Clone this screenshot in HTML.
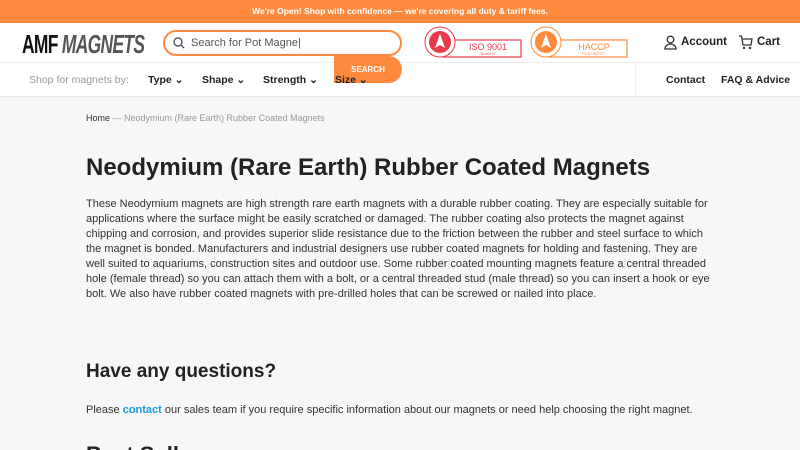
<!DOCTYPE html>
<html><head><meta charset="utf-8"><style>
*{margin:0;padding:0;box-sizing:border-box}
html,body{width:800px;height:450px;overflow:hidden}
body{background:#f7f7f7;font-family:"Liberation Sans",sans-serif;color:#222;position:relative}
.top{height:23px;background:#ff8a3d;color:#fff;font-size:8.5px;font-weight:bold;text-align:center;line-height:23px}
.hdr{position:absolute;top:23px;left:0;width:800px;height:40px;background:#fff;border-bottom:1px solid #eee}
.nav{position:absolute;top:63px;left:0;width:800px;height:34px;background:#fff;border-bottom:1px solid #e8e8e8}
.abs{position:absolute}
.logo{left:22px;top:6px;font-size:26px;font-weight:bold;letter-spacing:-1px;transform:scaleX(.67);transform-origin:left;white-space:nowrap;color:#111}
.logo i{color:#555}
.search{left:163px;top:7px;width:239px;height:26px;border:2px solid #ff8a3d;border-radius:13px;background:#fff;font-size:11px;color:#555;padding-left:26px;line-height:22px}
.btn{left:334px;top:56px;width:68px;height:27px;background:#ff8a3d;border-radius:0 14px 14px 0;color:#fff;font-size:8px;font-weight:bold;text-align:center;line-height:27px;z-index:3}
.n{font-size:10.5px;font-weight:bold;color:#222;top:11px;z-index:5}
.c{position:absolute;left:86px;width:630px}
</style></head><body>
<div class="top">We're Open! Shop with confidence — we're covering all duty &amp; tariff fees.</div>
<div class="hdr">
<div class="abs logo">AMF <i>MAGNETS</i></div>
<div class="abs search"><svg class="abs" style="left:8px;top:5px" width="12" height="12" viewBox="0 0 12 12"><circle cx="5" cy="5" r="4" fill="none" stroke="#556" stroke-width="1.4"/><path d="M8 8l3 3" stroke="#556" stroke-width="1.4"/></svg>Search for Pot Magne|</div>
<svg class="abs" style="left:423px;top:3px" width="100" height="34"><rect x="20" y="14" width="78" height="17" fill="#fff" stroke="#e8394a" stroke-width="1.2"/><circle cx="17" cy="16" r="15" fill="#fff" stroke="#e8394a"/><circle cx="17" cy="16" r="11" fill="#e8394a"/><path d="M17 8l5 14-5-3-5 3z" fill="#fff"/><text x="65" y="24" font-size="9" fill="#e8394a" text-anchor="middle" font-family="Liberation Sans">ISO 9001</text><text x="65" y="29" font-size="3.5" fill="#e8394a" text-anchor="middle">QUALITY</text></svg>
<svg class="abs" style="left:529px;top:3px" width="100" height="34"><rect x="20" y="14" width="78" height="17" fill="#fff" stroke="#ff8a3d" stroke-width="1.2"/><circle cx="17" cy="16" r="15" fill="#fff" stroke="#ff8a3d"/><circle cx="17" cy="16" r="11" fill="#ff8a3d"/><path d="M17 8l5 14-5-3-5 3z" fill="#fff"/><text x="65" y="24" font-size="9" fill="#ff8a3d" text-anchor="middle">HACCP</text><text x="65" y="29" font-size="3.5" fill="#ff8a3d" text-anchor="middle">FOOD SAFETY</text></svg>
<svg class="abs" style="left:664px;top:12px" width="13" height="15" viewBox="0 0 13 15"><circle cx="6.5" cy="4.5" r="3.3" fill="none" stroke="#333" stroke-width="1.3"/><path d="M1 14c0-3 2.5-5 5.5-5s5.5 2 5.5 5z" fill="none" stroke="#333" stroke-width="1.3"/></svg>
<div class="abs n" style="left:681px;top:13px;font-size:11.5px">Account</div>
<svg class="abs" style="left:738px;top:12px" width="15" height="15" viewBox="0 0 15 15"><path d="M1 1h2.5l1.5 9h8l1-6H4" fill="none" stroke="#333" stroke-width="1.3"/><circle cx="6" cy="13" r="1.2" fill="#333"/><circle cx="12" cy="13" r="1.2" fill="#333"/></svg>
<div class="abs n" style="left:757px;top:13px;font-size:11.5px">Cart</div>
</div>
<div class="nav">
<div class="abs" style="left:29px;top:11px;font-size:10.5px;color:#999">Shop for magnets by:</div>
<div class="abs n" style="left:148px">Type ⌄</div>
<div class="abs n" style="left:202px">Shape ⌄</div>
<div class="abs n" style="left:263px">Strength ⌄</div>
<div class="abs" style="left:635px;top:0;width:1px;height:34px;background:#eee"></div>
<div class="abs n" style="left:666px">Contact</div>
<div class="abs n" style="left:721px">FAQ &amp; Advice</div>
</div>
<div class="btn abs">SEARCH</div>
<div class="abs n" style="left:335px;top:74px">Size ⌄</div>
<div class="c" style="top:113px;font-size:9px;color:#999"><span style="color:#333">Home</span> — Neodymium (Rare Earth) Rubber Coated Magnets</div>
<div class="c" style="top:154px;font-size:24px;font-weight:bold;color:#222;white-space:nowrap">Neodymium (Rare Earth) Rubber Coated Magnets</div>
<div class="c" style="top:197px;font-size:11px;line-height:15px;color:#333">These Neodymium magnets are high strength rare earth magnets with a durable rubber coating. They are especially suitable for applications where the surface might be easily scratched or damaged. The rubber coating also protects the magnet against chipping and corrosion, and provides superior slide resistance due to the friction between the rubber and steel surface to which the magnet is bonded. Manufacturers and industrial designers use rubber coated magnets for holding and fastening. They are well suited to aquariums, construction sites and outdoor use. Some rubber coated mounting magnets feature a central threaded hole (female thread) so you can attach them with a bolt, or a central threaded stud (male thread) so you can insert a hook or eye bolt. We also have rubber coated magnets with pre-drilled holes that can be screwed or nailed into place.</div>
<div class="c" style="top:361px;font-size:19px;font-weight:bold">Have any questions?</div>
<div class="c" style="top:404px;font-size:11px;color:#333">Please <b style="color:#1a9ad6">contact</b> our sales team if you require specific information about our magnets or need help choosing the right magnet.</div>
<div class="c" style="top:442px;font-size:22px;font-weight:bold">Best Sellers</div>
</body></html>
